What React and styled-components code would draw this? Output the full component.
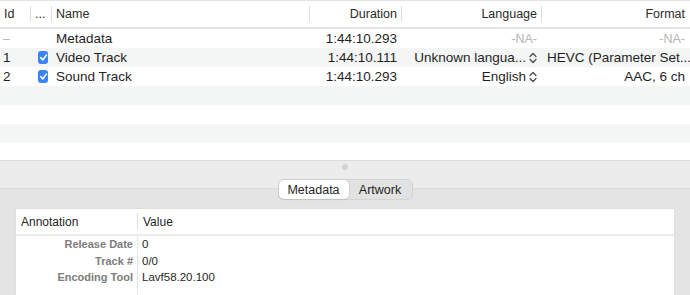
import React from "react";
import styled, { createGlobalStyle } from "styled-components";

const GlobalStyle = createGlobalStyle`
  html, body { margin: 0; padding: 0; }
  body {
    font-family: "Liberation Sans", Arial, sans-serif;
    background: #e4e4e4;
    color: #1f1f1f;
    -webkit-font-smoothing: antialiased;
  }
`;

const COLS = "31px 21px 258px 92px 140px 1fr";

const Window = styled.div`
  width: 690px;
  height: 295px;
  overflow: hidden;
  display: flex;
  flex-direction: column;
`;

const TrackTable = styled.div`
  background: #fff;
  border-top: 1px solid #e3e3e3;
  height: 159px;
  overflow: hidden;
  border-bottom: 1px solid #dadada;
`;

const HeaderRow = styled.div`
  display: grid;
  grid-template-columns: ${COLS};
  height: 26px;
  border-bottom: 2px solid #e6e6e6;
  font-size: 12.5px;
  color: #2a2a2a;
`;

const HeaderCell = styled.div`
  position: relative;
  display: flex;
  align-items: center;
  justify-content: ${(p) => (p.$right ? "flex-end" : "flex-start")};
  padding: 0 ${(p) => (p.$right ? "5px" : "4px")};
  white-space: nowrap;
  &::after {
    content: "";
    display: ${(p) => (p.$last ? "none" : "block")};
    position: absolute;
    right: 0;
    top: 5px;
    bottom: 5px;
    width: 1px;
    background: #dedede;
  }
`;

const Row = styled.div`
  display: grid;
  grid-template-columns: ${COLS};
  height: 19px;
  background: ${(p) => (p.$alt ? "#f4f5f5" : "#fff")};
  font-size: 13.5px;
`;

const Cell = styled.div`
  display: flex;
  align-items: center;
  justify-content: ${(p) => (p.$right ? "flex-end" : "flex-start")};
  padding: 0 ${(p) => (p.$right ? "5px" : "4px")};
  white-space: nowrap;
  color: ${(p) => (p.$dim ? "#b5b5b5" : "#1f1f1f")};
  font-size: ${(p) => (p.$dim ? "12.5px" : "inherit")};
`;

const IdCell = styled(Cell)`
  padding-left: 3px;
`;

const Check = styled.span`
  width: 13px;
  height: 13px;
  border-radius: 3px;
  background: #3b84f6;
  display: flex;
  align-items: center;
  justify-content: center;
  margin-left: 3px;
`;

const Popup = styled.span`
  display: inline-flex;
  align-items: center;
  gap: 3px;
`;

const Splitter = styled.div`
  height: 27px;
  background: #ececec;
  display: flex;
  justify-content: center;
  padding-top: 3px;
  box-sizing: border-box;
`;

const Dot = styled.span`
  width: 6px;
  height: 6px;
  border-radius: 50%;
  background: #d2d2d2;
`;

const TabArea = styled.div`
  flex: 1;
  background: #e4e4e4;
  border-top: 1px solid #dcdcdc;
  display: flex;
  flex-direction: column;
  align-items: center;
`;

const Segmented = styled.div`
  display: flex;
  margin-top: -10px;
  background: #e2e2e2;
  border: 1px solid #d4d4d4;
  border-radius: 6px;
  height: 19px;
`;

const Tab = styled.div`
  display: flex;
  align-items: center;
  justify-content: center;
  width: ${(p) => p.$w}px;
  font-size: 12.5px;
  color: #1f1f1f;
  border-radius: 5px;
  background: ${(p) => (p.$active ? "#fff" : "transparent")};
  box-shadow: ${(p) => (p.$active ? "0 0 0 0.5px #c8c8c8, 0 1px 1px rgba(0,0,0,0.12)" : "none")};
`;

const MetaBox = styled.div`
  align-self: stretch;
  margin: 8px 15px 0 15px;
  flex: 1;
  background: #fff;
  border: 1px solid #e0e0e0;
  border-bottom: none;
  display: flex;
  flex-direction: column;
`;

const MetaHeader = styled.div`
  display: grid;
  grid-template-columns: 121px 1fr;
  height: 25px;
  border-bottom: 2px solid #ececec;
  font-size: 12px;
  color: #1f1f1f;
`;

const MetaHeadCell = styled.div`
  display: flex;
  align-items: center;
  padding-left: 5px;
  border-left: ${(p) => (p.$sep ? "1px solid #e0e0e0" : "none")};
  margin: ${(p) => (p.$sep ? "4px 0" : "0")};
`;

const MetaBody = styled.div`
  flex: 1;
  display: grid;
  grid-template-columns: 121px 1fr;
  align-content: start;
  background: linear-gradient(to right, transparent 121px, #e6e6e6 121px, #e6e6e6 122px, transparent 122px);
`;

const Label = styled.div`
  height: 16.5px;
  display: flex;
  align-items: center;
  justify-content: flex-end;
  padding-right: 4px;
  font-size: 11px;
  font-weight: bold;
  color: #7c7c7c;
`;

const Value = styled.div`
  height: 16.5px;
  display: flex;
  align-items: center;
  padding-left: 5px;
  font-size: 11.5px;
  color: #1f1f1f;
`;

const Tick = () => (
  <svg width="9" height="9" viewBox="0 0 10 10">
    <path d="M2 5.2 L4.2 7.6 L8.2 2.4" fill="none" stroke="#fff" strokeWidth="1.8" strokeLinecap="round" strokeLinejoin="round" />
  </svg>
);

const UpDown = () => (
  <svg width="8" height="12" viewBox="0 0 8 12">
    <path d="M1 4.5 L4 1.5 L7 4.5 M1 7.5 L4 10.5 L7 7.5" fill="none" stroke="#444" strokeWidth="1.2" strokeLinecap="round" strokeLinejoin="round" />
  </svg>
);

const tracks = [
  { id: "–", checked: false, name: "Metadata", duration: "1:44:10.293", lang: null, format: null },
  { id: "1", checked: true, name: "Video Track", duration: "1:44:10.111", lang: "Unknown langua...", format: "HEVC (Parameter Set..." },
  { id: "2", checked: true, name: "Sound Track", duration: "1:44:10.293", lang: "English", format: "AAC, 6 ch" },
];

const meta = [
  ["Release Date", "0"],
  ["Track #", "0/0"],
  ["Encoding Tool", "Lavf58.20.100"],
];

const App = () => {
  return (
    <>
      <GlobalStyle />
      <Window>
        <TrackTable>
          <HeaderRow>
            <HeaderCell>Id</HeaderCell>
            <HeaderCell>...</HeaderCell>
            <HeaderCell>Name</HeaderCell>
            <HeaderCell $right>Duration</HeaderCell>
            <HeaderCell $right>Language</HeaderCell>
            <HeaderCell $right $last>Format</HeaderCell>
          </HeaderRow>
          {tracks.map((t, i) => (
            <Row key={i} $alt={i % 2 === 1}>
              <IdCell $dim={t.id === "–"}>{t.id}</IdCell>
              <Cell>{t.checked && <Check><Tick /></Check>}</Cell>
              <Cell>{t.name}</Cell>
              <Cell $right>{t.duration}</Cell>
              {t.lang ? (
                <Cell $right><Popup>{t.lang}<UpDown /></Popup></Cell>
              ) : (
                <Cell $right $dim>-NA-</Cell>
              )}
              {t.format ? <Cell $right>{t.format}</Cell> : <Cell $right $dim>-NA-</Cell>}
            </Row>
          ))}
          {[3, 4, 5, 6].map((i) => (
            <Row key={i} $alt={i % 2 === 1} />
          ))}
        </TrackTable>
        <Splitter>
          <Dot />
        </Splitter>
        <TabArea>
          <Segmented>
            <Tab $active $w={70}>Metadata</Tab>
            <Tab $w={63}>Artwork</Tab>
          </Segmented>
          <MetaBox>
            <MetaHeader>
              <MetaHeadCell>Annotation</MetaHeadCell>
              <MetaHeadCell $sep>Value</MetaHeadCell>
            </MetaHeader>
            <MetaBody>
              {meta.map(([k, v]) => (
                <React.Fragment key={k}>
                  <Label>{k}</Label>
                  <Value>{v}</Value>
                </React.Fragment>
              ))}
            </MetaBody>
          </MetaBox>
        </TabArea>
      </Window>
    </>
  );
};

export default App;
